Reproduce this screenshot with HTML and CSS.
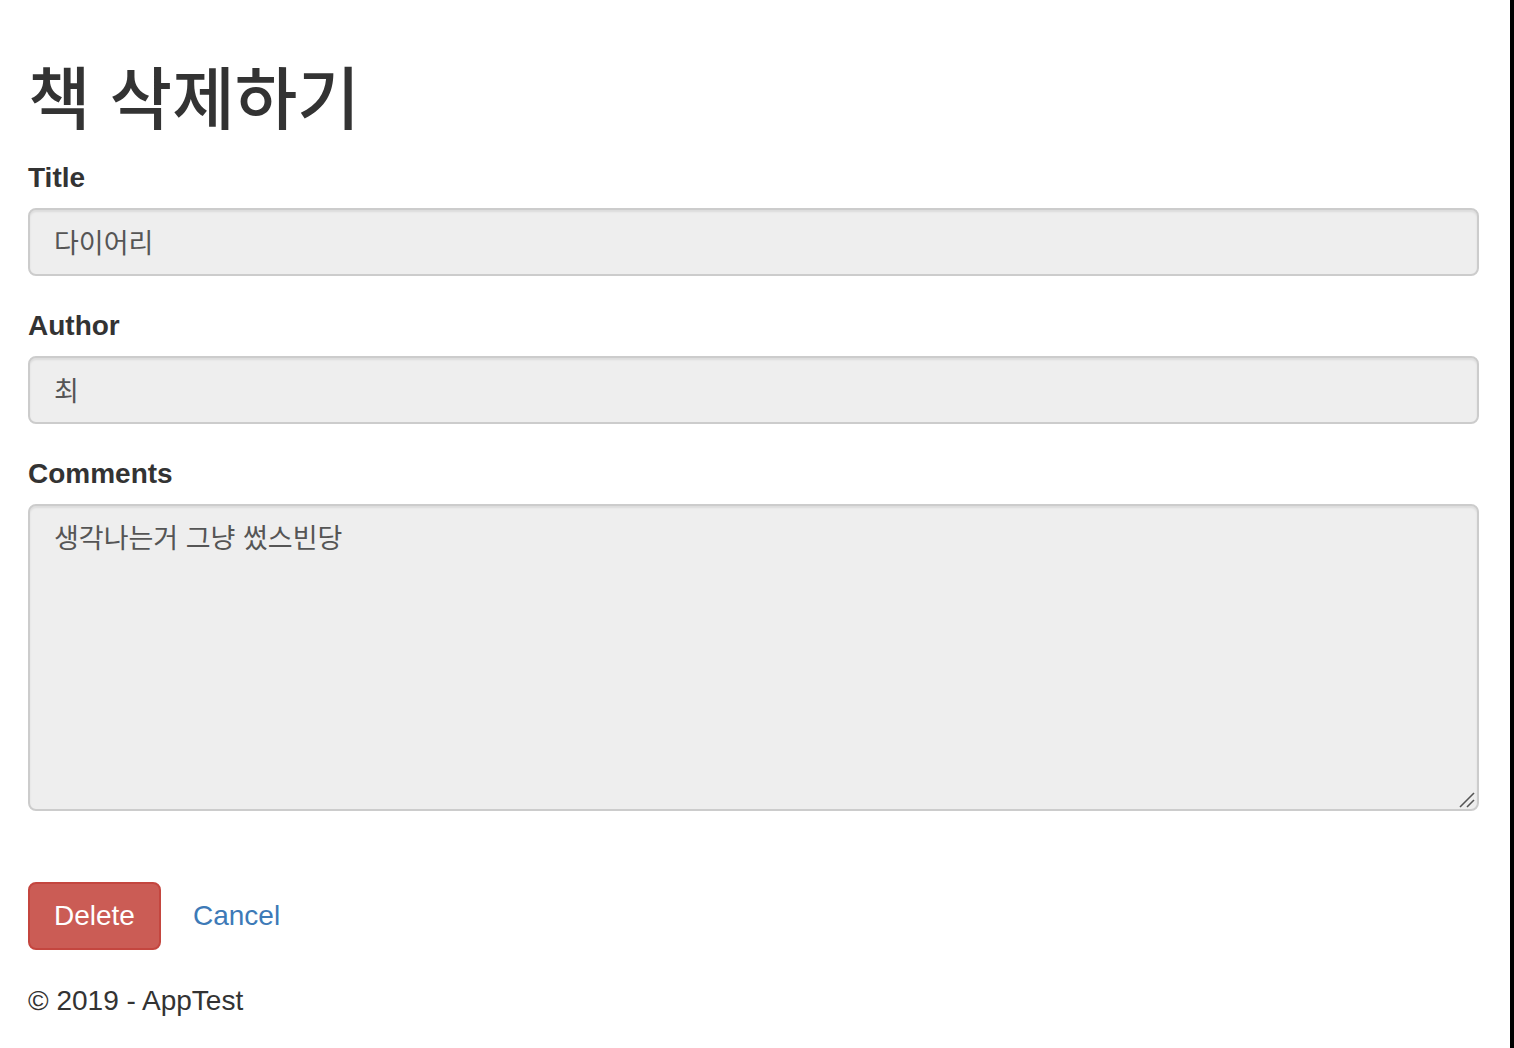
FILE: index.html
```html
<!DOCTYPE html>
<html lang="ko">
<head>
<meta charset="utf-8">
<title>책 삭제하기</title>
<link rel="stylesheet" href="styles.css">
</head>
<body>
<div class="frame">
  <main class="page">
    <h1 class="page-title">책 삭제하기</h1>
    <form class="book-form">
      <div class="form-group">
        <label class="control-label" for="title">Title</label>
        <input class="form-control" id="title" type="text" value="다이어리" readonly>
      </div>
      <div class="form-group">
        <label class="control-label" for="author">Author</label>
        <input class="form-control" id="author" type="text" value="최" readonly>
      </div>
      <div class="form-group">
        <label class="control-label" for="comments">Comments</label>
        <div class="textarea-wrap">
          <textarea class="form-control comments" id="comments" readonly>생각나는거 그냥 썼스빈당</textarea>
          <svg class="grip" width="18" height="16" viewBox="0 0 18 16" aria-hidden="true">
            <line x1="2" y1="15" x2="16" y2="1" stroke="#555" stroke-width="1.6"/>
            <line x1="9" y1="15" x2="16" y2="8" stroke="#555" stroke-width="1.6"/>
          </svg>
        </div>
      </div>
      <div class="actions">
        <button type="button" class="btn btn-danger">Delete</button>
        <a class="cancel-link" href="#">Cancel</a>
      </div>
    </form>
    <footer class="site-footer">© 2019 - AppTest</footer>
  </main>
  <div class="edge"></div>
</div>
</body>
</html>
```

FILE: styles.css
```css
* { box-sizing: border-box; }

html, body {
  margin: 0;
  padding: 0;
  background: #fff;
}

body {
  font-family: "Liberation Sans", "Noto Sans CJK KR", Arial, sans-serif;
  font-size: 28px;
  line-height: 1.42857;
  color: #333;
}

.frame {
  display: flex;
  min-height: 100vh;
}

.page {
  flex: 1;
  padding: 0 31px 0 28px;
}

.edge {
  width: 4px;
  background: #000;
  flex: none;
}

.page-title {
  font-family: "Noto Sans CJK KR", "Liberation Sans", sans-serif;
  font-size: 68px;
  font-weight: 500;
  line-height: 1.1;
  margin: 58px 0 25px;
  color: #333;
}

.form-group {
  margin-bottom: 30px;
}

.control-label {
  display: block;
  font-weight: bold;
  margin-bottom: 10px;
  line-height: 40px;
}

.form-control {
  display: block;
  width: 100%;
  height: 68px;
  padding: 12px 24px;
  font-family: "Noto Sans CJK KR", "Liberation Sans", sans-serif;
  font-size: 27px;
  line-height: 40px;
  color: #555;
  background: #eee;
  border: 2px solid #ccc;
  border-radius: 8px;
  box-shadow: inset 0 2px 2px rgba(0,0,0,.075);
  outline: none;
}

.textarea-wrap {
  position: relative;
}

.comments {
  height: 307px;
  resize: none;
  padding-top: 11px;
}

.grip {
  position: absolute;
  right: 3px;
  bottom: 3px;
}

.actions {
  display: flex;
  align-items: center;
  gap: 32px;
  margin-top: 71px;
}

.btn {
  height: 68px;
  padding: 0 24px;
  font-family: "Liberation Sans", Arial, sans-serif;
  font-size: 28px;
  line-height: 40px;
  border-radius: 8px;
  cursor: pointer;
}

.btn-danger {
  color: #fff;
  background: #cb5c55;
  border: 2px solid #c4463f;
}

.cancel-link {
  color: #3d7ab7;
  text-decoration: none;
}

.site-footer {
  margin-top: 31px;
  line-height: 40px;
}
```
